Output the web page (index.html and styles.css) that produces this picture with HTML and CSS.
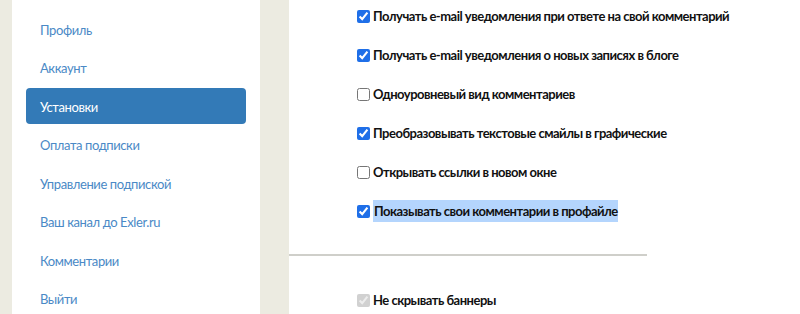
FILE: index.html
```html
<!DOCTYPE html>
<html lang="ru">
<head>
  <meta charset="UTF-8">
  <title>Установки</title>
  <link rel="stylesheet" href="styles.css">
</head>
<body>
  <div class="page">
    <div class="sidebar">
      <ul class="menu">
        <li><a href="#">Профиль</a></li>
        <li><a href="#">Аккаунт</a></li>
        <li class="active"><a href="#">Установки</a></li>
        <li><a href="#">Оплата подписки</a></li>
        <li><a href="#">Управление подпиской</a></li>
        <li><a href="#">Ваш канал до Exler.ru</a></li>
        <li><a href="#">Комментарии</a></li>
        <li><a href="#">Выйти</a></li>
      </ul>
    </div>

    <div class="main">
      <div class="settings">
        <label class="option"><input type="checkbox" checked> Получать e-mail уведомления при ответе на свой комментарий</label>
        <label class="option"><input type="checkbox" checked> Получать e-mail уведомления о новых записях в блоге</label>
        <label class="option"><input type="checkbox"> Одноуровневый вид комментариев</label>
        <label class="option"><input type="checkbox" checked> Преобразовывать текстовые смайлы в графические</label>
        <label class="option"><input type="checkbox"> Открывать ссылки в новом окне</label>
        <label class="option"><input type="checkbox" checked><span class="selected">Показывать свои комментарии в профайле</span></label>
      </div>
      <hr class="divider">
      <div class="settings extra">
        <label class="option disabled"><input type="checkbox" checked disabled> Не скрывать баннеры</label>
      </div>
    </div>
  </div>
</body>
</html>
```

FILE: styles.css
```css
* {
  margin: 0;
  padding: 0;
  box-sizing: border-box;
}

body {
  width: 800px;
  height: 314px;
  background: #ecebe1;
  font-family: Lato, 'Open Sans', sans-serif;
  overflow: hidden;
}

.page {
  display: flex;
  gap: 29px;
  padding-left: 12px;
  height: 314px;
}

.sidebar {
  width: 248px;
  background: #fff;
  padding: 11px 14px 0;
}

.menu {
  list-style: none;
}

.menu li {
  height: 36px;
  margin-bottom: 2.43px;
  border-radius: 4px;
}

.menu li a {
  display: block;
  height: 36px;
  line-height: 38px;
  padding-left: 14px;
  font-size: 13px;
  letter-spacing: -0.4px;
  color: #4a89c6;
  text-decoration: none;
}

.menu li.active {
  background: #337ab7;
}

.menu li.active a {
  color: #fff;
}

.main {
  flex: 1;
  background: #fff;
}

.settings {
  display: flex;
  flex-direction: column;
  gap: 17px;
  padding: 5px 0 0 68px;
}

.option {
  display: flex;
  align-items: center;
  height: 22px;
  font-size: 13px;
  font-weight: 700;
  letter-spacing: -0.5px;
  color: #111;
}

.option input {
  width: 13px;
  height: 13px;
  margin: 0 3px 0 0;
  accent-color: #1f6fe8;
}

.selected {
  background: #b4d5fd;
  padding: 1px 0 1px 1px;
  line-height: 20px;
}

.divider {
  width: 358px;
  border: none;
  border-top: 2px solid #cfcfca;
  margin-top: 32px;
}

.extra {
  padding-top: 33px;
}
```
